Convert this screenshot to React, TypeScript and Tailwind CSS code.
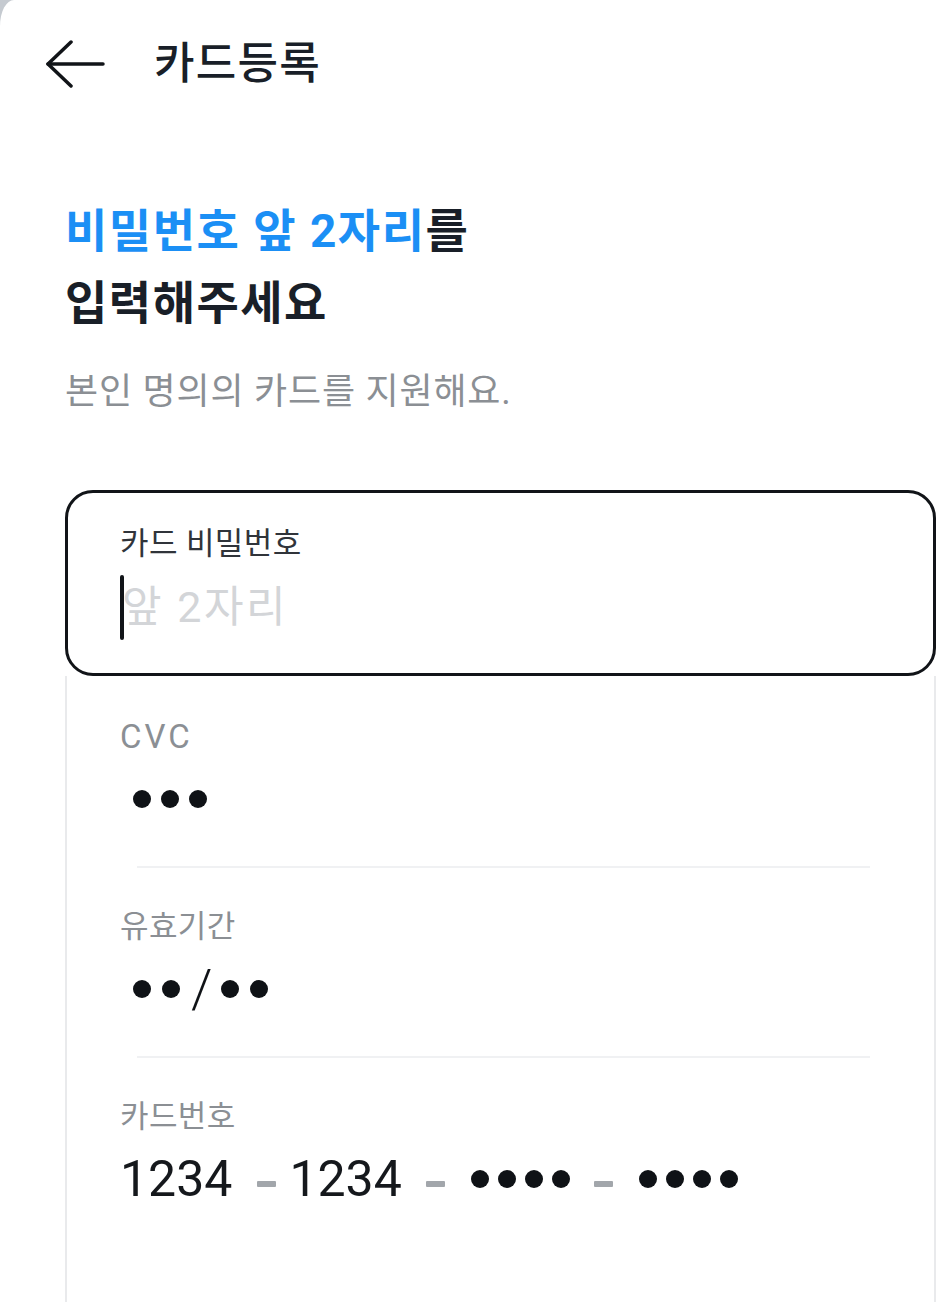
import React from 'react';

const font = { fontFamily: 'Roboto, "Noto Sans CJK KR", sans-serif' };

function Dot() {
  return <div className="w-[18px] h-[18px] rounded-full bg-[#0f1216]" />;
}

function Dash({ className = '' }: { className?: string }) {
  return <div className={`w-[19px] h-[6px] mt-[10px] rounded-[1px] bg-[#a2a6ab] ${className}`} />;
}

function Divider() {
  return <div className="ml-[70px] mr-[64px] mt-[45px] h-[2px] bg-[#f0f1f3]" />;
}

export default function App() {
  return (
    <div className="w-[947px] h-[1302px] overflow-hidden bg-[#c5cad0]" style={font}>
      <div className="h-full flex flex-col bg-white rounded-tl-[14px_26px]">
        {/* Header */}
        <div className="h-[128px] flex items-center pl-[45px] shrink-0">
          <svg width="60" height="48" viewBox="0 0 60 48" fill="none" stroke="#111418" strokeWidth="3.5" strokeLinecap="round" strokeLinejoin="round">
            <path d="M3 24 H58" />
            <path d="M26 2 L3 24 L26 46" />
          </svg>
          <h1 className="ml-[49px] text-[44px] leading-[56px] tracking-[1.3px] font-medium text-[#191f28]">카드등록</h1>
        </div>

        {/* Title */}
        <div className="pl-[65px] pr-[11px] flex-1 flex flex-col">
          <h2 className="mt-[67px] text-[46px] leading-[72px] tracking-[1.5px] font-bold text-[#191f28]">
            <span className="text-[#1b8ff5]">비밀번호 앞 2자리</span>를
            <br />
            입력해주세요
          </h2>
          <p className="mt-[29px] text-[36px] leading-[48px] tracking-[0.8px] text-[#8b8f94]">본인 명의의 카드를 지원해요.</p>

          {/* Card form */}
          <div className="mt-[74px] flex-1 flex flex-col">
            <div className="h-[186px] shrink-0 border-[3px] border-[#111418] rounded-[28px] pl-[52px] pt-[31px]">
              <div className="text-[31px] leading-[40px] tracking-[0.4px] text-[#30343a]">카드 비밀번호</div>
              <div className="mt-[11px] h-[65px] flex items-center">
                <div className="relative z-10 w-[4px] h-[65px] rounded-full bg-[#111418]" />
                <span className="-ml-[2px] text-[43px] leading-none tracking-[2.5px] text-[#d3d5d8]">앞 2자리</span>
              </div>
            </div>

            <div className="flex-1 border-x-2 border-[#e9eaec]">
              {/* CVC */}
              <div className="pl-[53px] pt-[41px]">
                <div className="text-[33px] leading-[40px] tracking-[3px] text-[#8b8f94]">CVC</div>
                <div className="mt-[20px] h-[44px] flex items-center gap-[10px] ml-[13px]">
                  <Dot />
                  <Dot />
                  <Dot />
                </div>
              </div>
              <Divider />

              {/* Expiry */}
              <div className="pl-[53px] pt-[39px]">
                <div className="text-[31px] leading-[40px] tracking-[0.4px] text-[#8b8f94]">유효기간</div>
                <div className="mt-[20px] h-[44px] flex items-center ml-[13px]">
                  <Dot />
                  <div className="ml-[11px]"><Dot /></div>
                  <span className="ml-[11px] text-[54px] leading-none font-light text-[#0f1216]">/</span>
                  <div className="ml-[9px]"><Dot /></div>
                  <div className="ml-[11px]"><Dot /></div>
                </div>
              </div>
              <Divider />

              {/* Card number */}
              <div className="pl-[53px] pt-[39px]">
                <div className="text-[31px] leading-[40px] tracking-[0.4px] text-[#8b8f94]">카드번호</div>
                <div className="mt-[20px] h-[44px] flex items-center text-[50px] leading-none text-[#15181c]">
                  <span>1234</span>
                  <Dash className="ml-[25px]" />
                  <span className="ml-[13px]">1234</span>
                  <Dash className="ml-[24px]" />
                  <div className="ml-[26px] flex items-center gap-[9px]">
                    <Dot />
                    <Dot />
                    <Dot />
                    <Dot />
                  </div>
                  <Dash className="ml-[24px]" />
                  <div className="ml-[26px] flex items-center gap-[9px]">
                    <Dot />
                    <Dot />
                    <Dot />
                    <Dot />
                  </div>
                </div>
              </div>
            </div>
          </div>
        </div>
      </div>
    </div>
  );
}
